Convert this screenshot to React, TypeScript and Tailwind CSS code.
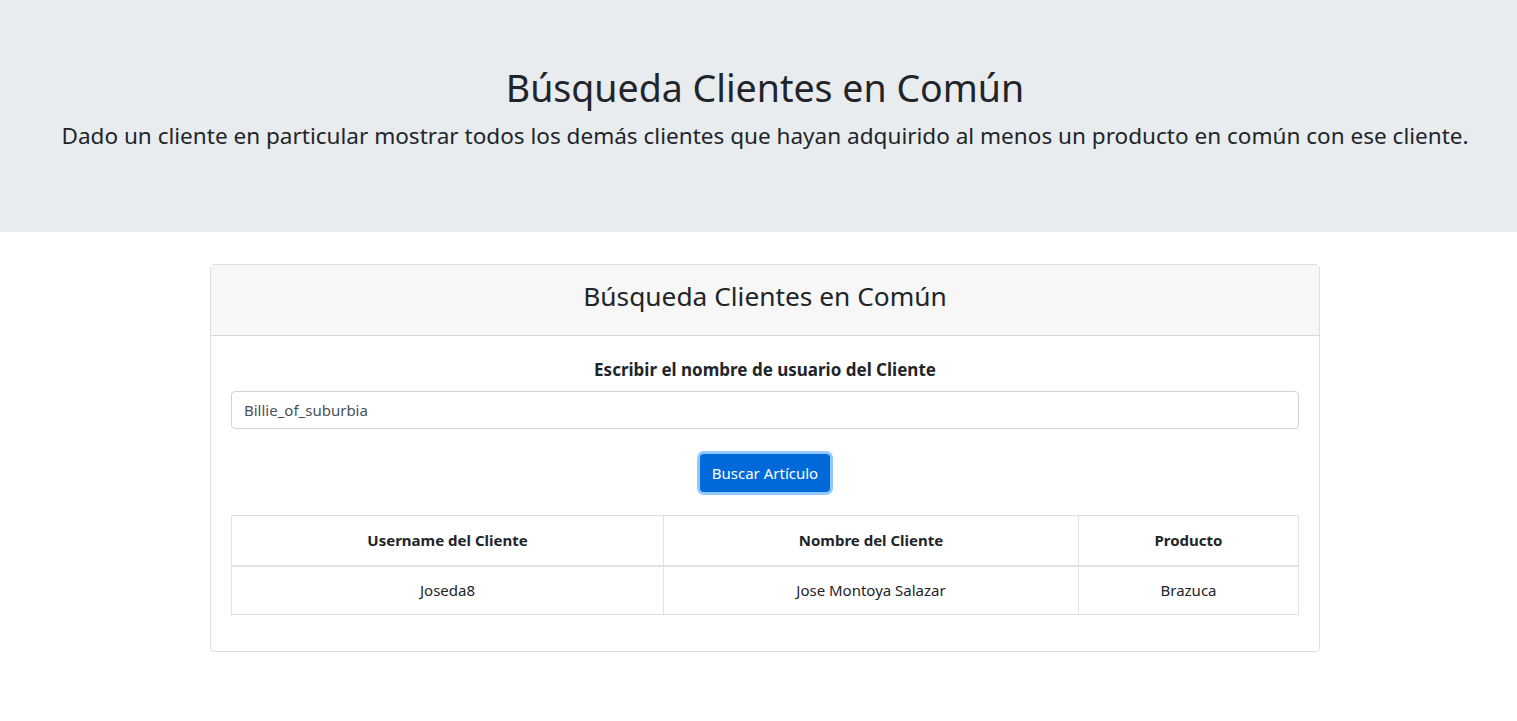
export default function App() {
  const rows = [
    { username: "Joseda8", nombre: "Jose Montoya Salazar", producto: "Brazuca" },
  ];

  return (
    <div
      className="min-h-screen bg-white pl-[13px] text-[#212529]"
      style={{ fontFamily: '"Noto Sans", "Open Sans", sans-serif' }}
    >
      <div className="-ml-[13px] flex h-[232px] flex-col items-center bg-[#e9ecef] pt-16 pl-[13px] text-center">
        <h1 className="text-[37.5px] leading-[48px] font-normal">Búsqueda Clientes en Común</h1>
        <p className="mt-[9px] text-[22.55px] leading-[30px] font-normal">
          Dado un cliente en particular mostrar todos los demás clientes que hayan adquirido al menos un producto en común con ese cliente.
        </p>
      </div>

      <div className="mx-auto mt-8 w-[1110px]">
        <div className="rounded border border-black/[0.125]">
          <div className="flex h-[71px] items-center justify-center border-b border-black/[0.125] bg-[#f7f7f7] pb-2">
            <h3 className="text-[26.3px] leading-[34px] font-normal">Búsqueda Clientes en Común</h3>
          </div>
          <div className="px-5 pt-[22px] pb-9">
            <label className="block text-center text-[17px] leading-6 font-bold">
              Escribir el nombre de usuario del Cliente
            </label>
            <input
              defaultValue="Billie_of_suburbia"
              className="mt-[9px] block h-[38px] w-full rounded border border-[#ced4da] px-3 text-[15px] text-[#495057] outline-none"
            />
            <div className="mt-[25px] flex justify-center">
              <button
                type="button"
                className="h-[38px] w-[130px] rounded bg-[#0069d9] text-[15px] text-white shadow-[0_0_0_3px_rgba(38,143,255,0.5)]"
              >
                Buscar Artículo
              </button>
            </div>
            <table className="mt-[23px] w-full border-collapse text-[15px]">
              <thead>
                <tr className="h-[50px]">
                  <th className="w-[432px] border border-b-2 border-[#dee2e6] font-bold">Username del Cliente</th>
                  <th className="w-[415px] border border-b-2 border-[#dee2e6] font-bold">Nombre del Cliente</th>
                  <th className="border border-b-2 border-[#dee2e6] font-bold">Producto</th>
                </tr>
              </thead>
              <tbody>
                {rows.map((r) => (
                  <tr key={r.username} className="h-[49px]">
                    <td className="border border-[#dee2e6] text-center">{r.username}</td>
                    <td className="border border-[#dee2e6] text-center">{r.nombre}</td>
                    <td className="border border-[#dee2e6] text-center">{r.producto}</td>
                  </tr>
                ))}
              </tbody>
            </table>
          </div>
        </div>
      </div>
    </div>
  );
}
